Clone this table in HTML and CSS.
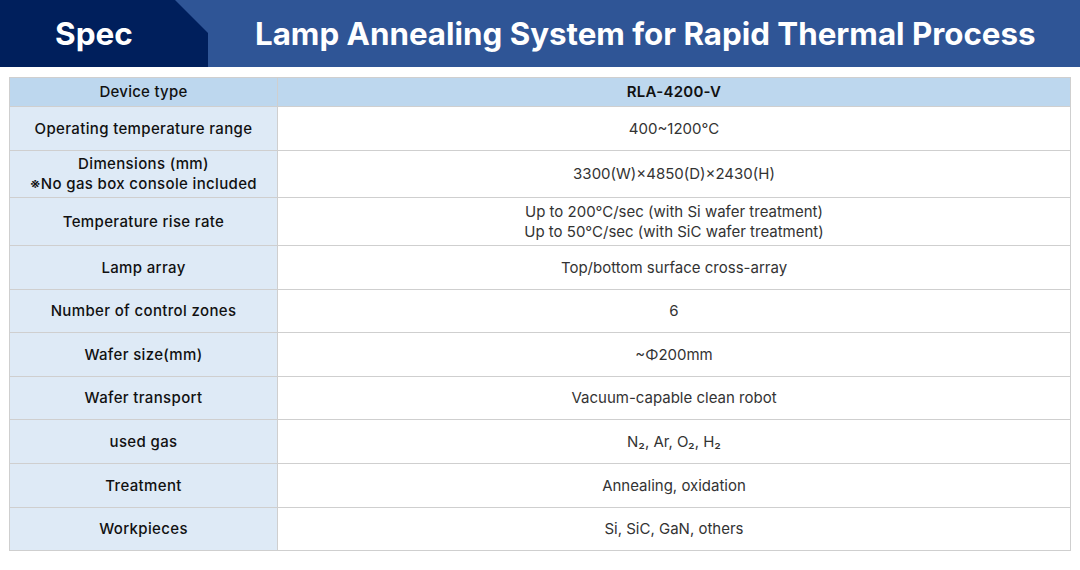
FILE: index.html
```html
<!DOCTYPE html>
<html>
<head>
<meta charset="utf-8">
<link rel="stylesheet" href="styles.css">
</head>
<body>
<header class="banner">
  <div class="spec">Spec</div>
  <h1 class="title">Lamp Annealing System for Rapid Thermal Process</h1>
</header>
<main class="wrap">
<table class="spec-table">
  <tr class="head"><th>Device type</th><th>RLA-4200-V</th></tr>
  <tr class="r44"><td class="k">Operating temperature range</td><td>400~1200°C</td></tr>
  <tr class="r47"><td class="k">Dimensions (mm)<br>※No gas box console included</td><td>3300(W)×4850(D)×2430(H)</td></tr>
  <tr class="r48"><td class="k">Temperature rise rate</td><td>Up to 200°C/sec (with Si wafer treatment)<br>Up to 50°C/sec (with SiC wafer treatment)</td></tr>
  <tr class="r44"><td class="k">Lamp array</td><td>Top/bottom surface cross-array</td></tr>
  <tr class="r43"><td class="k">Number of control zones</td><td>6</td></tr>
  <tr class="r44"><td class="k">Wafer size(mm)</td><td>~Φ200mm</td></tr>
  <tr class="r43"><td class="k">Wafer transport</td><td>Vacuum-capable clean robot</td></tr>
  <tr class="r44"><td class="k">used gas</td><td>N₂, Ar, O₂, H₂</td></tr>
  <tr class="r44"><td class="k">Treatment</td><td>Annealing, oxidation</td></tr>
  <tr class="r43"><td class="k">Workpieces</td><td>Si, SiC, GaN, others</td></tr>
</table>
</main>
</body>
</html>
```
FILE: styles.css
```css
* { box-sizing: border-box; }
html, body { margin: 0; padding: 0; background: #ffffff; }
body {
  width: 1080px;
  height: 570px;
  overflow: hidden;
  font-family: Inter, "Noto Sans", "Liberation Sans", sans-serif;
}
.banner {
  display: flex;
  align-items: stretch;
  height: 67px;
  background: #2f5596;
}
.spec {
  width: 208px;
  flex: none;
  background: #001f5c;
  clip-path: polygon(0 0, 175px 0, 208px 33px, 208px 100%, 0 100%);
  color: #fff;
  font-weight: 700;
  font-size: 31.5px;
  display: flex;
  align-items: center;
  justify-content: center;
  padding-right: 20px;
  letter-spacing: 0;
}
.title {
  margin: 0;
  flex: 1;
  color: #fff;
  font-weight: 700;
  font-size: 31.3px;
  display: flex;
  align-items: center;
  padding-left: 47px;
  letter-spacing: 0;
}
.wrap {
  padding: 10px 9px 0 9px;
}
.spec-table {
  width: 1062px;
  border-collapse: collapse;
  table-layout: fixed;
  font-size: 15px;
  color: #222;
}
.spec-table th, .spec-table td {
  border: 1px solid #cfcfcf;
  text-align: center;
  vertical-align: middle;
  padding: 0;
  line-height: 20px;
}
.spec-table th {
  background: #bdd7ee;
  font-weight: 500;
  height: 29px;
  color: #111;
  letter-spacing: 0.25px;
}
.spec-table th:first-child { width: 268px; }
.spec-table th:last-child { font-weight: 600; }
.spec-table td { color: #333; font-weight: 400; }
.spec-table td.k {
  background: #deeaf6;
  font-weight: 500;
  color: #111;
  letter-spacing: 0.35px;
}
.r43 td { height: 43px; }
.r44 td { height: 44px; }
.r47 td { height: 47px; }
.r48 td { height: 48px; }
```
